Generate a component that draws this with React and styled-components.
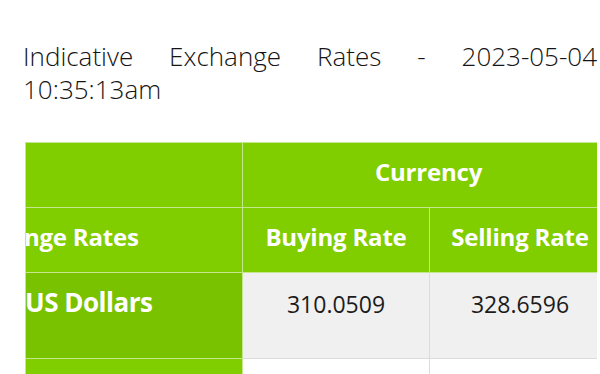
import React from 'react'
import styled, { createGlobalStyle } from 'styled-components'

const GlobalStyle = createGlobalStyle`
  body {
    margin: 0;
    background: #fff;
    font-family: 'Open Sans', 'Liberation Sans', sans-serif;
  }
`

const Page = styled.div`
  padding: 40px 3px 0 23px;
  overflow: hidden;
`

const Title = styled.h2`
  margin: 0;
  font-size: 26px;
  font-weight: 300;
  line-height: 33px;
  color: #151515;
  text-align: justify;
`

const TableWrap = styled.div`
  margin: 36px 0 0 2px;
  overflow: hidden;
`

const Table = styled.table`
  width: 573px;
  border-collapse: collapse;
  table-layout: fixed;
`

const HeadRow = styled.tr`
  height: 65px;
`

const HeadCell = styled.th`
  background: #80cd00;
  color: #fff;
  font-size: 24px;
  font-weight: 700;
  letter-spacing: -0.2px;
  border: 1px solid #c4e68f;
  text-align: ${(p) => (p.$left ? 'left' : 'center')};
  padding: 0 0 8px ${(p) => p.$shift || 0}px;
  white-space: nowrap;
  overflow: hidden;
  text-indent: ${(p) => p.$indent || 0}px;
`

const BodyRow = styled.tr`
  height: 86px;
`

const NameCell = styled.td`
  background: ${(p) => (p.$odd ? '#79c200' : '#80ce00')};
  color: #fff;
  font-size: 26px;
  font-weight: 700;
  letter-spacing: -0.5px;
  border: 1px solid #c4e68f;
  vertical-align: top;
  padding: 11px 0 0;
  text-indent: -1px;
  white-space: nowrap;
  overflow: hidden;
`

const RateCell = styled.td`
  background: ${(p) => (p.$odd ? '#f0f0f0' : '#fff')};
  color: #1c1c1c;
  font-size: 23px;
  font-weight: 400;
  border: 1px solid #dcdcdc;
  text-align: center;
  vertical-align: top;
  padding: 15px 0 0 ${(p) => p.$shift || 0}px;
`

const rates = [
  { name: 'US Dollars', buying: '310.0509', selling: '328.6596' },
  { name: '', buying: '', selling: '' },
]

export default function App() {
  return (
    <>
      <GlobalStyle />
      <Page>
        <Title>Indicative Exchange Rates - 2023-05-04 10:35:13am</Title>
        <TableWrap>
          <Table>
            <colgroup>
              <col style={{ width: 217 }} />
              <col style={{ width: 187 }} />
              <col style={{ width: 169 }} />
            </colgroup>
            <thead>
              <HeadRow>
                <HeadCell />
                <HeadCell colSpan={2} $shift={16}>
                  Currency
                </HeadCell>
              </HeadRow>
              <HeadRow>
                <HeadCell $left $indent={-71}>
                  Exchange Rates
                </HeadCell>
                <HeadCell>Buying Rate</HeadCell>
                <HeadCell $shift={12}>Selling Rate</HeadCell>
              </HeadRow>
            </thead>
            <tbody>
              {rates.map((r, i) => (
                <BodyRow key={i}>
                  <NameCell $odd={i % 2 === 0}>{r.name}</NameCell>
                  <RateCell $odd={i % 2 === 0}>{r.buying}</RateCell>
                  <RateCell $odd={i % 2 === 0} $shift={12}>
                    {r.selling}
                  </RateCell>
                </BodyRow>
              ))}
            </tbody>
          </Table>
        </TableWrap>
      </Page>
    </>
  )
}
